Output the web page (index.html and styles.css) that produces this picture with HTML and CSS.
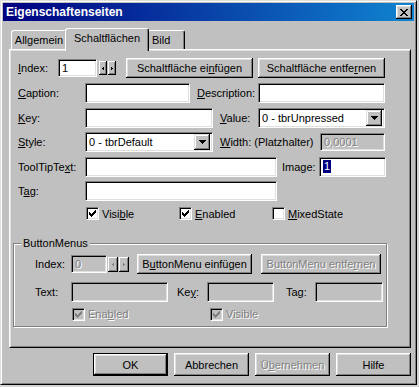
FILE: index.html
```html
<!DOCTYPE html>
<html lang="de">
<head>
    <meta charset="UTF-8">
    <title>Eigenschaftenseiten</title>
    <link rel="stylesheet" href="styles.css">
</head>
<body>
<div class="window">
    <div class="titlebar">
        <span class="title">Eigenschaftenseiten</span>
        <span class="close">
            <svg width="8" height="7" viewBox="0 0 8 7"><path d="M0 0h2v1H0zM6 0h2v1H6zM1 1h2v1H1zM5 1h2v1H5zM2 2h4v1H2zM3 3h2v1H3zM2 4h4v1H2zM1 5h2v1H1zM5 5h2v1H5zM0 6h2v1H0zM6 6h2v1H6z" fill="#000"/></svg>
        </span>
    </div>

    <div class="tabs">
        <div class="tab tab-allgemein">Allgemein</div>
        <div class="tab tab-active">Schaltflächen</div>
        <div class="tab tab-bild">Bild</div>
    </div>

    <div class="panel">
        <div class="fields">
            <div class="row">
                <span class="lbl lbl-index"><u>I</u>ndex:</span>
                <div class="field idx-input">1</div>
                <div class="spin">
                    <span class="spin-btn"><svg width="2" height="3" viewBox="0 0 2 3"><path d="M1 0h1v3H1zM0 1h1v1H0z" fill="#000"/></svg></span>
                    <span class="spin-btn"><svg width="2" height="3" viewBox="0 0 2 3"><path d="M0 0h1v3H0zM1 1h1v1H1z" fill="#000"/></svg></span>
                </div>
                <button class="btn btn-add">Schaltfläche ei<u>n</u>fügen</button>
                <button class="btn btn-remove">Schaltfläche entfe<u>r</u>nen</button>
            </div>

            <div class="row">
                <span class="lbl lbl-main"><u>C</u>aption:</span>
                <div class="field caption-input"></div>
                <span class="lbl lbl-desc"><u>D</u>escription:</span>
                <div class="field desc-input"></div>
            </div>

            <div class="row row-short">
                <span class="lbl lbl-main"><u>K</u>ey:</span>
                <div class="field key-input"></div>
                <span class="lbl lbl-value"><u>V</u>alue:</span>
                <div class="field combo desc-input">
                    <span>0 - tbrUnpressed</span>
                    <span class="combo-btn"><svg width="7" height="4" viewBox="0 0 7 4"><path d="M0 0h7v1H0zM1 1h5v1H1zM2 2h3v1H2zM3 3h1v1H3z" fill="#000"/></svg></span>
                </div>
            </div>

            <div class="row">
                <span class="lbl lbl-main"><u>S</u>tyle:</span>
                <div class="field combo key-input">
                    <span>0 - tbrDefault</span>
                    <span class="combo-btn"><svg width="7" height="4" viewBox="0 0 7 4"><path d="M0 0h7v1H0zM1 1h5v1H1zM2 2h3v1H2zM3 3h1v1H3z" fill="#000"/></svg></span>
                </div>
                <span class="lbl lbl-width"><u>W</u>idth: (Platzhalter)</span>
                <div class="field field-disabled width-input"><span class="dis-text">0,0001</span></div>
            </div>

            <div class="row row-short">
                <span class="lbl lbl-main">ToolTipTe<u>x</u>t:</span>
                <div class="field long-input"></div>
                <span class="lbl lbl-image">Image:</span>
                <div class="field image-input"><span class="sel">1</span></div>
            </div>

            <div class="row">
                <span class="lbl lbl-main">T<u>a</u>g:</span>
                <div class="field long-input"></div>
            </div>

            <div class="checks">
                <div class="check">
                    <span class="box"><svg width="7" height="7" viewBox="0 0 7 7"><path d="M6 0h1v1H6zM5 1h2v1H5zM0 2h1v1H0zM4 2h3v1H4zM0 3h2v1H0zM3 3h3v1H3zM0 4h5v1H0zM1 5h3v1H1zM2 6h1v1H2z" fill="#000"/></svg></span>
                    <span>Visi<u>b</u>le</span>
                </div>
                <div class="check">
                    <span class="box"><svg width="7" height="7" viewBox="0 0 7 7"><path d="M6 0h1v1H6zM5 1h2v1H5zM0 2h1v1H0zM4 2h3v1H4zM0 3h2v1H0zM3 3h3v1H3zM0 4h5v1H0zM1 5h3v1H1zM2 6h1v1H2z" fill="#000"/></svg></span>
                    <span><u>E</u>nabled</span>
                </div>
                <div class="check">
                    <span class="box"></span>
                    <span><u>M</u>ixedState</span>
                </div>
            </div>
        </div>

        <div class="group">
            <span class="group-title">ButtonMenus</span>

            <div class="group-row">
                <span class="lbl lbl-group">Index:</span>
                <div class="field field-disabled menu-idx"><span class="dis-text">0</span></div>
                <div class="spin spin-group">
                    <span class="spin-btn"><svg width="2" height="3" viewBox="0 0 2 3"><path d="M1 0h1v3H1zM0 1h1v1H0z" fill="#808080"/></svg></span>
                    <span class="spin-btn"><svg width="2" height="3" viewBox="0 0 2 3"><path d="M0 0h1v3H0zM1 1h1v1H1z" fill="#808080"/></svg></span>
                </div>
                <button class="btn btn-menu-add">B<u>u</u>ttonMenu einfügen</button>
                <button class="btn btn-menu-remove disabled">ButtonMenu entfe<u>r</u>nen</button>
            </div>

            <div class="group-row group-row-text">
                <span class="lbl lbl-group">Text:</span>
                <div class="field field-disabled menu-text"></div>
                <span class="lbl lbl-menu-key">Ke<u>y</u>:</span>
                <div class="field field-disabled menu-key"></div>
                <span class="lbl lbl-menu-tag">Tag:</span>
                <div class="field field-disabled menu-tag"></div>
            </div>

            <div class="group-checks">
                <div class="check check-wide disabled">
                    <span class="box box-disabled"><svg width="7" height="7" viewBox="0 0 7 7"><path d="M6 0h1v1H6zM5 1h2v1H5zM0 2h1v1H0zM4 2h3v1H4zM0 3h2v1H0zM3 3h3v1H3zM0 4h5v1H0zM1 5h3v1H1zM2 6h1v1H2z" fill="#808080"/></svg></span>
                    <span>Ena<u>b</u>led</span>
                </div>
                <div class="check disabled">
                    <span class="box box-disabled"><svg width="7" height="7" viewBox="0 0 7 7"><path d="M6 0h1v1H6zM5 1h2v1H5zM0 2h1v1H0zM4 2h3v1H4zM0 3h2v1H0zM3 3h3v1H3zM0 4h5v1H0zM1 5h3v1H1zM2 6h1v1H2z" fill="#808080"/></svg></span>
                    <span>Visible</span>
                </div>
            </div>
        </div>
    </div>

    <div class="actions">
        <button class="btn btn-dlg btn-default">OK</button>
        <button class="btn btn-dlg">Abbrechen</button>
        <button class="btn btn-dlg disabled">Ü<u>b</u>ernehmen</button>
        <button class="btn btn-dlg">Hilfe</button>
    </div>
</div>
</body>
</html>
```

FILE: styles.css
```css
* {
    box-sizing: border-box;
}

body {
    margin: 0;
    background-color: #d4d4d4;
    font-family: "Liberation Sans", Arial, sans-serif;
    font-size: 11px;
    color: #000;
}

u {
    text-decoration-thickness: 1px;
    text-underline-offset: 1px;
}

.window {
    width: 417px;
    height: 385px;
    background-color: #c0c0c0;
    border: 1px solid;
    border-color: #dfdfdf #000 #000 #dfdfdf;
    box-shadow: inset 1px 1px #fff, inset -1px -1px #808080;
    padding: 2px;
}

/* title bar */
.titlebar {
    height: 18px;
    background: linear-gradient(to right, #000080, #1084d0);
    display: flex;
    align-items: center;
    justify-content: space-between;
    padding: 0 2px 0 3px;
}

.title {
    color: #fff;
    font-weight: bold;
    font-size: 12px;
}

.close {
    width: 16px;
    height: 14px;
    background-color: #c0c0c0;
    box-shadow: inset -1px -1px #000, inset 1px 1px #fff, inset -2px -2px #808080, inset 2px 2px #dfdfdf;
    display: flex;
    align-items: center;
    justify-content: center;
}

/* tabs */
.tabs {
    display: flex;
    height: 21px;
    margin: 7px 0 0 6px;
    padding-left: 2px;
}

.tab {
    height: 19px;
    margin-top: 2px;
    padding-top: 3px;
    text-align: center;
    background-color: #c0c0c0;
    border-top: 1px solid #fff;
    border-left: 1px solid #fff;
    border-right: 1px solid #000;
    box-shadow: inset -1px 0 #808080;
    border-radius: 3px 3px 0 0;
}

.tab-allgemein {
    width: 56px;
}

.tab-active {
    width: 84px;
    height: 23px;
    margin: 0 -2px;
    padding-top: 3px;
    position: relative;
    z-index: 1;
}

.tab-bild {
    width: 38px;
    text-align: left;
    padding-left: 4px;
}

/* page */
.panel {
    width: 402px;
    height: 299px;
    margin-left: 6px;
    border: 1px solid;
    border-color: #fff #000 #000 #fff;
    box-shadow: inset 1px 1px #dfdfdf, inset -1px -1px #808080;
    padding: 8px 0 0 3px;
}

.fields {
    display: flex;
    flex-direction: column;
    padding-left: 5px;
}

.row {
    display: flex;
    align-items: center;
    height: 20px;
    margin-bottom: 5px;
}

.row-short {
    height: 19px;
}

.lbl {
    white-space: nowrap;
}

.lbl-index { width: 40px; }
.lbl-main { width: 67px; }
.lbl-desc { width: 68px; padding-left: 7px; }
.lbl-value { width: 45px; padding-left: 7px; }
.lbl-width { width: 107px; padding-left: 7px; }
.lbl-image { width: 42px; padding-left: 5px; }

/* sunken edit field */
.field {
    height: 20px;
    background-color: #fff;
    border: 1px solid;
    border-color: #808080 #fff #fff #808080;
    box-shadow: inset 1px 1px #000, inset -1px -1px #dfdfdf;
    padding: 0 2px 0 3px;
    display: flex;
    align-items: center;
    white-space: nowrap;
}

.field-disabled {
    background-color: #c0c0c0;
}

.dis-text,
.disabled {
    color: #808080;
    text-shadow: 1px 1px #fff;
}

.idx-input { width: 39px; height: 18px; }
.caption-input { width: 105px; }
.desc-input { width: 127px; }
.key-input { width: 128px; }
.width-input { width: 65px; height: 18px; }
.long-input { width: 192px; }
.image-input { width: 67px; }

.sel {
    background-color: #000080;
    color: #fff;
    padding: 0 1px;
    line-height: 13px;
}

.combo {
    justify-content: space-between;
    padding-right: 2px;
}

.combo-btn {
    width: 16px;
    height: 16px;
    background-color: #c0c0c0;
    box-shadow: inset -1px -1px #000, inset 1px 1px #dfdfdf, inset -2px -2px #808080, inset 2px 2px #fff;
    display: flex;
    align-items: center;
    justify-content: center;
}

/* spin buttons */
.spin {
    display: flex;
    gap: 1px;
    margin-left: 2px;
}

.spin-btn {
    width: 8px;
    height: 14px;
    background-color: #c0c0c0;
    box-shadow: inset -1px -1px #000, inset 1px 1px #fff, inset -2px -2px #808080;
    display: flex;
    align-items: center;
    justify-content: center;
}

.spin-group {
    margin-left: 1px;
}

.spin-group .spin-btn {
    width: 10px;
    height: 15px;
}

/* buttons */
.btn {
    font: inherit;
    color: #000;
    background-color: #c0c0c0;
    border: none;
    padding: 0;
    height: 20px;
    white-space: nowrap;
    box-shadow: inset -1px -1px #000, inset 1px 1px #fff, inset -2px -2px #808080, inset 2px 2px #dfdfdf;
}

.btn.disabled {
    color: #808080;
}

.btn-add { width: 127px; margin-left: 10px; }
.btn-remove { width: 127px; margin-left: 5px; }

/* check boxes */
.checks {
    display: flex;
    align-items: center;
    height: 15px;
    padding-left: 68px;
}

.check {
    display: flex;
    align-items: center;
    gap: 3px;
    width: 93px;
}

.box {
    width: 13px;
    height: 13px;
    background-color: #fff;
    border: 1px solid;
    border-color: #808080 #fff #fff #808080;
    box-shadow: inset 1px 1px #000, inset -1px -1px #dfdfdf;
    display: flex;
    align-items: center;
    justify-content: center;
}

.box-disabled {
    background-color: #c0c0c0;
}

/* ButtonMenus group */
.group {
    width: 374px;
    height: 84px;
    margin-top: 22px;
    border: 1px solid #808080;
    box-shadow: inset 1px 1px #fff, 1px 1px #fff;
}

.group-title {
    display: block;
    width: max-content;
    margin: -7px 0 0 7px;
    padding: 0 2px;
    line-height: 13px;
    background-color: #c0c0c0;
}

.group-row {
    display: flex;
    align-items: center;
    height: 20px;
    margin: 4px 0 0 21px;
}

.group-row-text {
    margin-top: 8px;
}

.lbl-group { width: 36px; }
.lbl-menu-key { width: 39px; padding-left: 9px; }
.lbl-menu-tag { width: 41px; padding-left: 12px; }

.menu-idx { width: 36px; height: 18px; }
.menu-text { width: 97px; }
.menu-key { width: 67px; }
.menu-tag { width: 68px; }

.btn-menu-add { width: 115px; margin-left: 8px; }
.btn-menu-remove { width: 120px; margin-left: 9px; }

.group-checks {
    display: flex;
    align-items: center;
    height: 14px;
    margin: 5px 0 0 58px;
}

.check-wide {
    width: 138px;
}

/* dialog buttons */
.actions {
    display: flex;
    justify-content: flex-end;
    gap: 6px;
    margin-top: 5px;
    padding-right: 3px;
}

.btn-dlg {
    width: 75px;
    height: 23px;
}

.btn-default {
    border: 1px solid #000;
}
```
